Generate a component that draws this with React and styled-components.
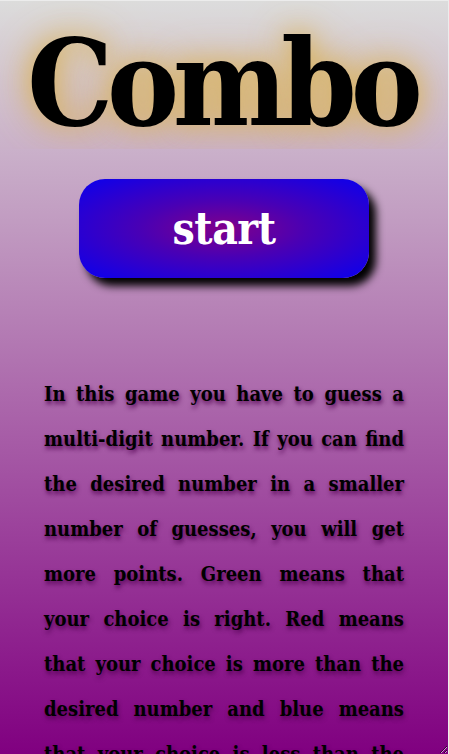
import React from "react";
import styled, { createGlobalStyle } from "styled-components";

const Global = createGlobalStyle`
  html, body { margin: 0; padding: 0; }
  body { font-family: "DejaVu Serif Condensed", "DejaVu Serif", serif; }
`;

const Frame = styled.div`
  box-sizing: border-box;
  width: 449px;
  height: 754px;
  border-top: 1px solid #ececec;
  border-right: 1px solid #ececec;
  background: linear-gradient(to bottom, #dcdcdc 0%, #800080 100%);
  overflow: hidden;
  resize: both;
`;

const Header = styled.header`
  height: 148px;
  overflow: hidden;
  display: flex;
  justify-content: center;
`;

const Title = styled.h1`
  margin: 0;
  padding: 12px 4px 0 0;
  font-family: "DejaVu Serif Condensed", "DejaVu Serif", serif;
  font-weight: 700;
  font-size: 120px;
  letter-spacing: -6px;
  line-height: 140px;
  color: #000;
  text-shadow: 0 0 25px #d9b462, 0 0 45px #d9b462;
`;

const Main = styled.main`
  display: flex;
  flex-direction: column;
  align-items: center;
`;

const StartButton = styled.button`
  margin-top: 30px;
  width: 290px;
  height: 99px;
  border: none;
  border-radius: 26px;
  background: radial-gradient(ellipse at center, #80008a 0%, #4a00b4 40%, #0a00ee 100%);
  box-shadow: 7px 8px 8px #000;
  color: #fff;
  font-family: "DejaVu Serif Condensed", "DejaVu Serif", serif;
  font-weight: 700;
  font-size: 44px;
  letter-spacing: -0.5px;
  cursor: pointer;
`;

const Info = styled.p`
  margin: 94px 0 0;
  width: 360px;
  font-family: "DejaVu Serif Condensed", "DejaVu Serif", serif;
  font-weight: 700;
  font-size: 20px;
  line-height: 45px;
  text-align: justify;
  color: #000;
  text-shadow: 1px 3px 4px rgba(80, 0, 80, 0.9);
`;

export default function App() {
  return (
    <>
      <Global />
      <Frame>
        <Header>
          <Title>Combo</Title>
        </Header>
        <Main>
          <StartButton>start</StartButton>
          <Info>
            In this game you have to guess a multi-digit number. If you can find
            the desired number in a smaller number of guesses, you will get more
            points. Green means that your choice is right. Red means that your
            choice is more than the desired number and blue means that your
            choice is less than the desired number.
          </Info>
        </Main>
      </Frame>
    </>
  );
}
